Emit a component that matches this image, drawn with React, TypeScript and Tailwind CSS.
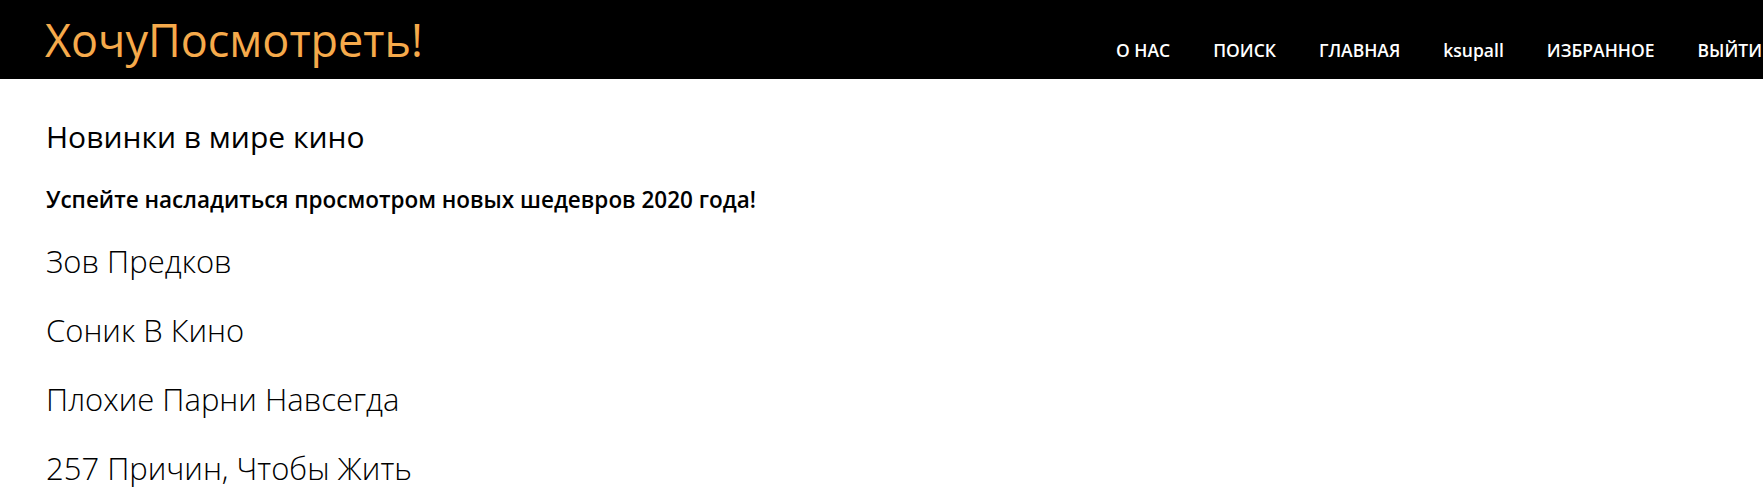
import React from 'react'

const links = ['О НАС', 'ПОИСК', 'ГЛАВНАЯ', 'ksupall', 'ИЗБРАННОЕ', 'ВЫЙТИ']
const movies = ['Зов Предков', 'Соник В Кино', 'Плохие Парни Навсегда', '257 Причин, Чтобы Жить']

export default function App() {
  return (
    <div className="min-h-[500px] bg-white text-black overflow-hidden" style={{ fontFamily: '"Open Sans", sans-serif' }}>
      <header className="h-[79px] bg-black flex items-center overflow-hidden">
        <a href="#" className="pl-[45px] text-[45px] leading-none text-[#f6aa4b] whitespace-nowrap">
          ХочуПосмотреть!
        </a>
        <nav className="ml-auto flex items-center gap-[43px] pt-[22px] pr-[1px] whitespace-nowrap">
          {links.map(l => (
            <a key={l} href="#" className="text-white text-[17.5px] font-semibold">{l}</a>
          ))}
        </nav>
      </header>
      <main className="pl-[46px] pt-[38px]">
        <h2 className="text-[30px] leading-[40px]">Новинки в мире кино</h2>
        <p className="mt-[28px] text-[22.5px] leading-[30px] font-semibold">Успейте насладиться просмотром новых шедевров 2020 года!</p>
        <ul className="mt-[26px] flex flex-col gap-[29px]">
          {movies.map(m => (
            <li key={m} className="text-[31px] leading-[40px] font-light">{m}</li>
          ))}
        </ul>
      </main>
    </div>
  )
}
